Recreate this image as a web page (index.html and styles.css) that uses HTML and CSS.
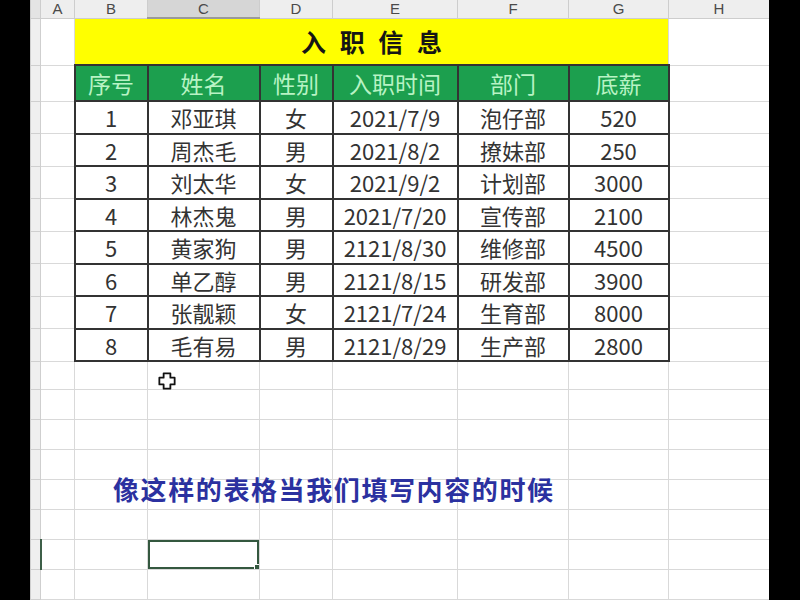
FILE: index.html
```html
<!DOCTYPE html>
<html lang="zh-CN">
<head>
<meta charset="utf-8">
<title>入职信息</title>
<link rel="stylesheet" href="styles.css">
</head>
<body>
<div class="screen">
  <div class="sheet">
    <table class="grid">
      <colgroup>
        <col class="c-rh"><col class="c-a"><col class="c-b"><col class="c-c"><col class="c-d"><col class="c-e"><col class="c-f"><col class="c-g"><col class="c-h">
      </colgroup>
      <thead>
        <tr class="colhead">
          <th class="corner"></th><th>A</th><th>B</th><th class="active">C</th><th>D</th><th>E</th><th>F</th><th>G</th><th>H</th>
        </tr>
      </thead>
      <tbody>
        <tr class="r-title">
          <td class="rh"></td><td></td><td class="title" colspan="6">入 职 信 息</td><td></td>
        </tr>
        <tr class="r-head">
          <td class="rh"></td><td></td>
          <td class="hd">序号</td><td class="hd">姓名</td><td class="hd">性别</td><td class="hd">入职时间</td><td class="hd">部门</td><td class="hd">底薪</td>
          <td></td>
        </tr>
        <tr class="r-data"><td class="rh"></td><td></td><td class="d">1</td><td class="d">邓亚琪</td><td class="d">女</td><td class="d">2021/7/9</td><td class="d">泡仔部</td><td class="d">520</td><td></td></tr>
        <tr class="r-data"><td class="rh"></td><td></td><td class="d">2</td><td class="d">周杰毛</td><td class="d">男</td><td class="d">2021/8/2</td><td class="d">撩妹部</td><td class="d">250</td><td></td></tr>
        <tr class="r-data"><td class="rh"></td><td></td><td class="d">3</td><td class="d">刘太华</td><td class="d">女</td><td class="d">2021/9/2</td><td class="d">计划部</td><td class="d">3000</td><td></td></tr>
        <tr class="r-data"><td class="rh"></td><td></td><td class="d">4</td><td class="d">林杰鬼</td><td class="d">男</td><td class="d">2021/7/20</td><td class="d">宣传部</td><td class="d">2100</td><td></td></tr>
        <tr class="r-data"><td class="rh"></td><td></td><td class="d">5</td><td class="d">黄家狗</td><td class="d">男</td><td class="d">2121/8/30</td><td class="d">维修部</td><td class="d">4500</td><td></td></tr>
        <tr class="r-data"><td class="rh"></td><td></td><td class="d">6</td><td class="d">单乙醇</td><td class="d">男</td><td class="d">2121/8/15</td><td class="d">研发部</td><td class="d">3900</td><td></td></tr>
        <tr class="r-data"><td class="rh"></td><td></td><td class="d">7</td><td class="d">张靓颖</td><td class="d">女</td><td class="d">2121/7/24</td><td class="d">生育部</td><td class="d">8000</td><td></td></tr>
        <tr class="r-data"><td class="rh"></td><td></td><td class="d">8</td><td class="d">毛有易</td><td class="d">男</td><td class="d">2121/8/29</td><td class="d">生产部</td><td class="d">2800</td><td></td></tr>
        <tr class="r-empty r-first"><td class="rh"></td><td></td><td></td><td></td><td></td><td></td><td></td><td></td><td></td></tr>
        <tr class="r-empty"><td class="rh"></td><td></td><td></td><td></td><td></td><td></td><td></td><td></td><td></td></tr>
        <tr class="r-empty"><td class="rh"></td><td></td><td></td><td></td><td></td><td></td><td></td><td></td><td></td></tr>
        <tr class="r-empty"><td class="rh"></td><td></td><td></td><td></td><td></td><td></td><td></td><td></td><td></td></tr>
        <tr class="r-empty"><td class="rh"></td><td></td><td></td><td></td><td></td><td></td><td></td><td></td><td></td></tr>
        <tr class="r-empty"><td class="rh"></td><td></td><td></td><td></td><td></td><td></td><td></td><td></td><td></td></tr>
        <tr class="r-empty"><td class="rh rh-active"></td><td></td><td></td><td class="sel"></td><td></td><td></td><td></td><td></td><td></td></tr>
        <tr class="r-empty"><td class="rh"></td><td></td><td></td><td></td><td></td><td></td><td></td><td></td><td></td></tr>
      </tbody>
    </table>
    <div class="caption">像这样的表格当我们填写内容的时候</div>
    <svg class="cursor" width="18" height="18" viewBox="0 0 16 16" aria-hidden="true">
      <path d="M5 1.2 H11 V5 H14.8 V11 H11 V14.8 H5 V11 H1.2 V5 H5 Z" fill="#fff" stroke="#111" stroke-width="1.6" stroke-linejoin="round"/>
    </svg>
  </div>
</div>
</body>
</html>
```

FILE: styles.css
```css
html, body {
  margin: 0;
  padding: 0;
  background: #000;
}

.screen {
  width: 800px;
  height: 600px;
  background: #000;
  overflow: hidden;
}

.sheet {
  position: relative;
  margin-left: 30px;
  width: 739px;
  height: 600px;
  background: #fff;
  overflow: hidden;
}

.grid {
  border-collapse: collapse;
  table-layout: fixed;
  width: 739px;
  font-family: "Noto Sans CJK SC", "Liberation Sans", sans-serif;
}

.c-rh { width: 10px; }
.c-a { width: 34px; }
.c-b { width: 73px; }
.c-c { width: 112px; }
.c-d { width: 73px; }
.c-e { width: 125px; }
.c-f { width: 111px; }
.c-g { width: 100px; }
.c-h { width: 101px; }

.grid td,
.grid th {
  padding: 0;
  border: 1px solid #d9d9d9;
  text-align: center;
  vertical-align: middle;
  line-height: 1;
  overflow: hidden;
  white-space: nowrap;
}

.colhead th {
  height: 17px;
  background: #eeeeee;
  border-color: #cdcdcd;
  border-top: none;
  font-family: "Liberation Sans", "DejaVu Sans", sans-serif;
  font-weight: normal;
  font-size: 15px;
  color: #4a4a4a;
}

.colhead th.active {
  background: #d6d6d6;
  border-bottom: 2px solid #9a9a9a;
}

.colhead th.corner {
  background: #e4e4e4;
}

.grid td.rh {
  background: #efefef;
  border-color: #cfcfcf;
}

.grid td.rh-active {
  border-right: 2px solid #3d5f48;
}

.r-title td {
  height: 45px;
}

.grid td.title {
  background: #ffff00;
  border-bottom: 2px solid #333;
  font-size: 25px;
  font-weight: bold;
  color: #151515;
  letter-spacing: 4px;
  padding-left: 4px;
}

.r-head td {
  height: 34px;
}

.grid td.hd {
  background: #1c9f4e;
  border: 2px solid #333;
  font-size: 23px;
  color: #b8f3c4;
}

.r-data td {
  height: 30.5px;
}

.grid td.d {
  border: 2px solid #333;
  font-size: 22px;
  color: #333;
}

.r-empty td {
  height: 29px;
}

.r-first td {
  height: 27px;
}

.grid td.sel {
  position: relative;
  box-shadow: inset 0 0 0 2px #34583f;
}

.grid td.sel::after {
  content: "";
  position: absolute;
  right: -3px;
  bottom: -3px;
  width: 6px;
  height: 6px;
  background: #34583f;
  border: 1px solid #fff;
}

.caption {
  position: absolute;
  left: 83px;
  top: 474px;
  font-family: "Noto Sans CJK SC", sans-serif;
  font-size: 26px;
  font-weight: bold;
  line-height: 30px;
  letter-spacing: 1.6px;
  color: #2b31a0;
  white-space: nowrap;
}

.cursor {
  position: absolute;
  left: 128px;
  top: 372px;
}
```
